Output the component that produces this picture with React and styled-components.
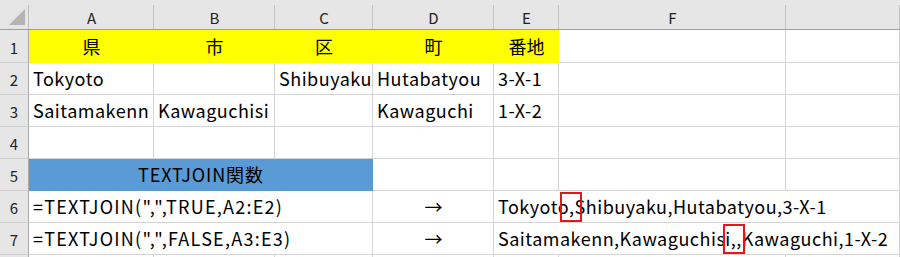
import React from "react";
import styled, { createGlobalStyle } from "styled-components";

const Global = createGlobalStyle`
  html, body { margin: 0; padding: 0; background: #fff; overflow: hidden; }
  body { font-family: "Noto Sans CJK JP", "Noto Sans", sans-serif; }
`;

const Sheet = styled.div`
  display: grid;
  grid-template-columns: 29px 125px 121px 98px 121px 65px 227px 1fr;
  grid-template-rows: 30px 33px repeat(7, 32px);
  width: 900px;
  height: 257px;
  overflow: hidden;
  color: #000;
`;

const Corner = styled.div`
  background: #e6e6e6;
  border-bottom: 1px solid #9e9e9e;
  display: flex;
  align-items: flex-end;
  justify-content: flex-end;
  padding: 0 3px 3px 0;
  box-sizing: border-box;
  background-image: linear-gradient(#bdbdbd, #bdbdbd);
  background-size: 1px calc(100% - 5px);
  background-position: right bottom;
  background-repeat: no-repeat;
`;

const ColHead = styled.div`
  background: #e6e6e6;
  border-bottom: 1px solid #9e9e9e;
  box-sizing: border-box;
  display: flex;
  align-items: center;
  justify-content: center;
  padding-top: 5px;
  font-size: 15px;
  line-height: 1;
  color: #222;
  background-image: linear-gradient(#c4c4c4, #c4c4c4);
  background-size: 1px calc(100% - 5px);
  background-position: right bottom;
  background-repeat: no-repeat;
`;

const RowHead = styled.div`
  background: #e6e6e6;
  border-right: 1px solid #a8a8a8;
  border-bottom: 1px solid #cfcfcf;
  box-sizing: border-box;
  display: flex;
  align-items: flex-end;
  justify-content: center;
  padding-bottom: 7px;
  font-size: 15px;
  line-height: 1;
  color: #222;
`;

const Cell = styled.div`
  grid-column: span ${(p) => p.$span || 1};
  box-sizing: border-box;
  background: ${(p) => p.$bg || "#fff"};
  border-right: 1px solid ${(p) => p.$bg || "#d4d4d4"};
  border-bottom: 1px solid ${(p) => p.$bg || "#d4d4d4"};
  display: flex;
  align-items: flex-end;
  justify-content: ${(p) => (p.$center ? "center" : "flex-start")};
  padding: 0 3px 7px 4px;
  font-size: 18px;
  line-height: 1;
  letter-spacing: ${(p) => p.$ls ?? 0.5}px;
  white-space: nowrap;
  overflow: visible;
`;

const Mark = styled.span`
  position: relative;
  &::after {
    content: "";
    position: absolute;
    top: -5px;
    bottom: -7px;
    left: ${(p) => p.$l}px;
    right: ${(p) => p.$r}px;
    border: 2px solid #e8141b;
  }
`;

const CornerIcon = () => (
  <svg width="18" height="18" viewBox="0 0 18 18">
    <polygon points="1,17 17,17 17,1" fill="#b4b4b4" />
  </svg>
);

const cols = ["A", "B", "C", "D", "E", "F", ""];

export default function App() {
  return (
    <>
      <Global />
      <Sheet>
        <Corner>
          <CornerIcon />
        </Corner>
        {cols.map((c, i) => (
          <ColHead key={i}>{c}</ColHead>
        ))}

        <RowHead>1</RowHead>
        <Cell $bg="#ffff00" $center $ls={0}>県</Cell>
        <Cell $bg="#ffff00" $center $ls={0}>市</Cell>
        <Cell $bg="#ffff00" $center $ls={0}>区</Cell>
        <Cell $bg="#ffff00" $center $ls={0}>町</Cell>
        <Cell $bg="#ffff00" $center $ls={0}>番地</Cell>
        <Cell />
        <Cell />

        <RowHead>2</RowHead>
        <Cell>Tokyoto</Cell>
        <Cell />
        <Cell>Shibuyaku</Cell>
        <Cell>Hutabatyou</Cell>
        <Cell>3-X-1</Cell>
        <Cell />
        <Cell />

        <RowHead>3</RowHead>
        <Cell>Saitamakenn</Cell>
        <Cell>Kawaguchisi</Cell>
        <Cell />
        <Cell>Kawaguchi</Cell>
        <Cell>1-X-2</Cell>
        <Cell />
        <Cell />

        <RowHead>4</RowHead>
        <Cell />
        <Cell />
        <Cell />
        <Cell />
        <Cell />
        <Cell />
        <Cell />

        <RowHead>5</RowHead>
        <Cell $bg="#5b9bd5" $span={3} $center $ls={0.9}>TEXTJOIN関数</Cell>
        <Cell />
        <Cell />
        <Cell />
        <Cell />

        <RowHead>6</RowHead>
        <Cell $span={3} $ls={1.25}>=TEXTJOIN(",",TRUE,A2:E2)</Cell>
        <Cell $center $ls={0}>→</Cell>
        <Cell $span={3}>
          Tokyoto<Mark $l={-9} $r={-7}>,</Mark>Shibuyaku,Hutabatyou,3-X-1
        </Cell>

        <RowHead>7</RowHead>
        <Cell $span={3} $ls={1.25}>=TEXTJOIN(",",FALSE,A3:E3)</Cell>
        <Cell $center $ls={0}>→</Cell>
        <Cell $span={3}>
          Saitamakenn,Kawaguchis<Mark $l={-2} $r={-3}>i,,</Mark>Kawaguchi,1-X-2
        </Cell>

        <RowHead />
        <Cell />
        <Cell />
        <Cell />
        <Cell />
        <Cell />
        <Cell />
        <Cell />
      </Sheet>
    </>
  );
}
